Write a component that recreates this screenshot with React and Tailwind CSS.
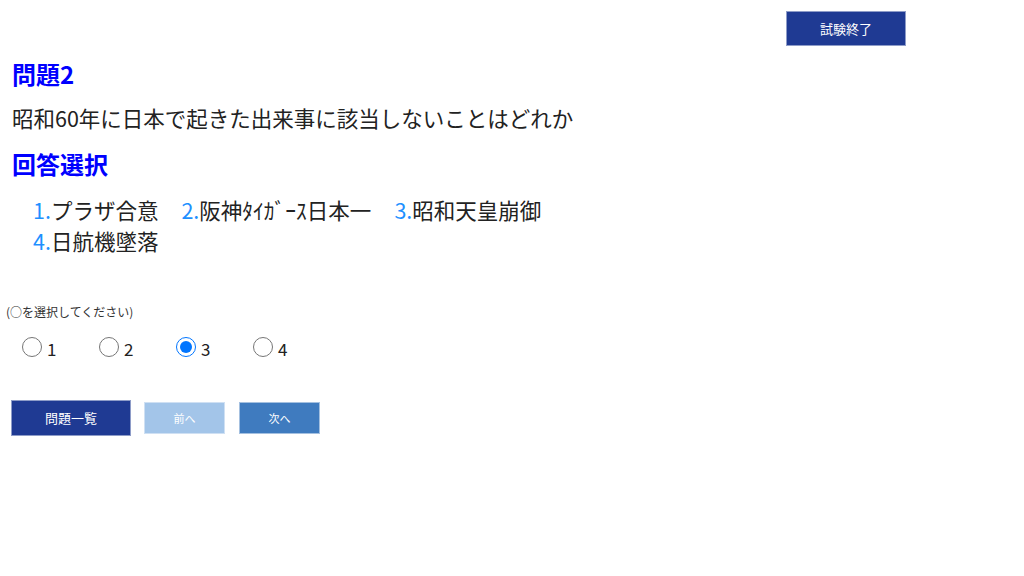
export default function App() {
  const choices = [
    { no: '1.', text: 'プラザ合意' },
    { no: '2.', text: '阪神ﾀｲｶﾞｰｽ日本一' },
    { no: '3.', text: '昭和天皇崩御' },
    { no: '4.', text: '日航機墜落' },
  ];
  const answers = ['1', '2', '3', '4'];

  return (
    <div
      className="w-[1024px] h-[576px] bg-white text-[#222] overflow-hidden"
      style={{ fontFamily: '"Noto Sans CJK JP", "Noto Sans", sans-serif' }}
    >
      {/* header */}
      <div className="flex justify-end pr-[118px] pt-[11px]">
        <button className="w-[120px] h-[35px] bg-[#1f3a93] border border-[#8e9cc8] text-white text-[13px]">
          試験終了
        </button>
      </div>

      <div className="pl-[12px]">
        <h2 className="mt-[11px] text-[24px] leading-[34px] font-bold text-[#0000ff]">問題2</h2>
        <p className="mt-[12px] text-[21.5px] leading-[30px]">
          昭和60年に日本で起きた出来事に該当しないことはどれか
        </p>
        <h2 className="mt-[14px] text-[24px] leading-[34px] font-bold text-[#0000ff]">回答選択</h2>

        <div className="mt-[13px] pl-[21px] w-[620px] flex flex-wrap text-[21.5px] leading-[31px]">
          {choices.map((c) => (
            <span key={c.no} className="mr-[23px] whitespace-nowrap">
              <span className="text-[#1e90ff]">{c.no}</span>
              {c.text}
            </span>
          ))}
        </div>
      </div>

      <div className="mt-[47px] pl-[6px] text-[12px] leading-[18px] text-[#333]">
        (○を選択してください)
      </div>

      <div className="mt-[16px] pl-[22px] flex items-end">
        {answers.map((a) => (
          <label key={a} className="w-[77px] flex items-end gap-[5px] text-[17px] leading-[20px]">
            <input
              type="radio"
              name="answer"
              defaultChecked={a === '3'}
              className="m-0 w-[20px] h-[20px]"
            />
            <span className="translate-y-[2px]">{a}</span>
          </label>
        ))}
      </div>

      <div className="mt-[43px] pl-[11px] flex items-center gap-[13px] text-white">
        <button className="w-[120px] h-[36px] bg-[#1f3a93] border border-[#8e9cc8] text-[13px]">
          問題一覧
        </button>
        <button className="w-[81px] h-[32px] bg-[#a3c5e9] border border-[#cfe0f3] text-[11px]">
          前へ
        </button>
        <button className="ml-[1px] w-[81px] h-[32px] bg-[#3f7bbf] border border-[#a4c0e0] text-[11px]">
          次へ
        </button>
      </div>
    </div>
  );
}
